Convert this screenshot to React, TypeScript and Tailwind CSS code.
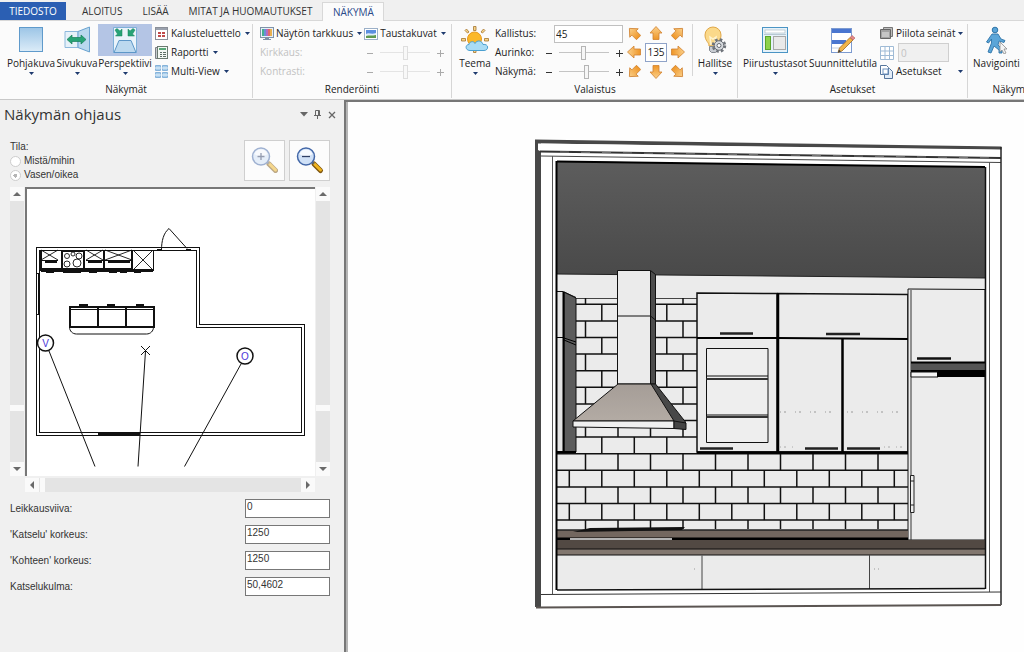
import { useState } from 'react';
import type { ReactNode } from 'react';

const tabs = ['ALOITUS', 'LISÄÄ', 'MITAT JA HUOMAUTUKSET'];

const viewFields = [
  { id: 'leikkausviiva', label: 'Leikkausviiva:', value: '0' },
  { id: 'katselu', label: "'Katselu' korkeus:", value: '1250' },
  { id: 'kohde', label: "'Kohteen' korkeus:", value: '1250' },
  { id: 'kulma', label: 'Katselukulma:', value: '50,4602' },
];

/* ---------- Icons ---------- */

function Caret() {
  return (
    <svg width="5" height="3" viewBox="0 0 5 3" className="shrink-0">
      <path d="M0 0h5L2.500 3z" fill="#1e3a6e" />
    </svg>
  );
}

function FloorIcon() {
  return (
    <svg width="26" height="28" viewBox="0 0 26 28">
      <defs>
        <linearGradient id="floor" x1="0" y1="0" x2="0" y2="1">
          <stop offset="0" stopColor="#9cc5e6" />
          <stop offset="1" stopColor="#dcecf8" />
        </linearGradient>
      </defs>
      <rect x="1.500" y="1.500" width="23" height="24" fill="url(#floor)" stroke="#5f9acb" />
    </svg>
  );
}

function SideIcon() {
  return (
    <svg width="28" height="28" viewBox="0 0 28 28">
      <path d="M2 5.500h13v16H2z" fill="#e6f1f9" stroke="#8db9dc" />
      <path d="M15 5.500L26.500 1v25L15 21.500z" fill="#b9d8ee" stroke="#6aa3d0" />
      <path d="M4 13.500l5-4.500v2.500h9V9l5 4.500-5 4.500v-2.500H9V18z" fill="#27a376" stroke="#178058" strokeWidth="0.700" />
    </svg>
  );
}

function PerspectiveIcon() {
  return (
    <svg width="28" height="28" viewBox="0 0 28 28">
      <path d="M2.500 1.500h23v25h-23z" fill="#eaf3fa" stroke="#7fb0d8" />
      <path d="M8 14.500h12l5 12H3z" fill="#bcd9ef" stroke="#5d97c8" />
      <path d="M4 4l2-1.500 3 2.500 2-2v7H4.500l2-2z" fill="#27a376" stroke="#178058" strokeWidth="0.500" />
      <path d="M24 4l-2-1.500-3 2.500-2-2v7h6.500l-2-2z" fill="#27a376" stroke="#178058" strokeWidth="0.500" />
    </svg>
  );
}

function ListIcon() {
  return (
    <svg width="14" height="14" viewBox="0 0 14 14">
      <rect x="0.500" y="0.500" width="12" height="12" fill="#fff" stroke="#8a8f98" />
      <path d="M1 1h11v2H1z" fill="#9aa1ad" />
      <path d="M3 5h3v2H3zM7 5h3v2H7zM3 8h3v2H3zM7 8h3v2H7z" fill="#c04b4b" />
    </svg>
  );
}

function ReportIcon() {
  return (
    <svg width="14" height="14" viewBox="0 0 14 14">
      <path d="M0.500 1.500h3v11h-3z" fill="#c8ccd0" stroke="#7b8086" />
      <rect x="2.500" y="0.500" width="10" height="12" fill="#f4f8f4" stroke="#6b7a70" />
      <path d="M4 2h7v2H4z" fill="#58a878" />
      <path d="M5 6.500h2M8 6.500h3M5 8.500h2M8 8.500h3M5 10.500h2M8 10.500h3" stroke="#5d6d64" />
    </svg>
  );
}

function MultiViewIcon() {
  return (
    <svg width="14" height="14" viewBox="0 0 14 14">
      <path d="M0.500 0.500h5v5h-5zM7.500 0.500h5v5h-5zM0.500 7.500h5v5h-5zM7.500 7.500h5v5h-5z" fill="#a8cdea" stroke="#86b3da" />
      <path d="M0 3h13M0 10h13" stroke="#e8f3fb" />
    </svg>
  );
}

function MonitorIcon() {
  return (
    <svg width="14" height="14" viewBox="0 0 14 14">
      <rect x="0.500" y="0.500" width="13" height="10" fill="#e8f0f8" stroke="#7f93a8" />
      <path d="M2 2h2v7H2z" fill="#45b08c" />
      <path d="M4 2h2v7H4z" fill="#6a8fd8" />
      <path d="M6 2h2v7H6z" fill="#b26cc0" />
      <path d="M8 2h2v7H8z" fill="#e06a6a" />
      <path d="M10 2h2v7h-2z" fill="#e8b050" />
      <path d="M5 11h4v1h2v1H3v-1h2z" fill="#7d90a5" />
    </svg>
  );
}

function PictureIcon() {
  return (
    <svg width="14" height="14" viewBox="0 0 14 14">
      <rect x="0.500" y="1.500" width="13" height="11" fill="#fff" stroke="#9bb0c8" />
      <path d="M2 3h10v4H2z" fill="#5b8fe0" />
      <path d="M2 8h10v3H2z" fill="#5f9a50" />
      <path d="M2 7c3-2 5 1 10-1v2c-4 1-7 0-10 1z" fill="#dfeefa" />
    </svg>
  );
}

function SunIcon() {
  return (
    <svg width="28" height="28" viewBox="0 0 28 28">
      <g fill="#f7d58a" stroke="#a3742e" strokeWidth="0.800">
        <path d="M12.500 0.500h2.500v4h-2.500zM12.500 23h2.500v3.500h-2.500zM0.500 12.500h4v2.500h-4zM23.500 12.500h4v2.500h-4z" />
        <path d="M4 4.500l1.500-1.500 2.500 3-1.500 1zM24 4.500l-1.500-1.500-2.500 3 1.500 1z" />
      </g>
      <circle cx="13.500" cy="13" r="7" fill="#fbb829" stroke="#e89a1c" />
      <path d="M9 24.500c-5 0-5-6-1-6 0-3 5-4 6-1 2-4 7-3 8 1 6-1 6 6 1 6z" fill="#a9dcf5" stroke="#4a9fd0" />
    </svg>
  );
}

function BulbIcon() {
  return (
    <svg width="24" height="28" viewBox="0 0 24 28">
      <path d="M6 20c0-4-4-5-4-11a8 8 0 0 1 16 0c0 6-4 7-4 11z" fill="#fbd98a" stroke="#e0a84a" />
      <path d="M8 19l-1-8 3 2 3-2-1 8" fill="none" stroke="#fff4d0" strokeWidth="1.500" />
      <path d="M6.500 20.500h8v4l-2 2h-4l-2-2z" fill="#c8ccd2" stroke="#83888f" />
      <circle cx="16" cy="19.500" r="6" fill="none" stroke="#6f747b" strokeWidth="2.500" strokeDasharray="2.600 2.112" />
      <circle cx="16" cy="19.500" r="4.800" fill="#d7dade" stroke="#666b72" />
      <circle cx="16" cy="19.500" r="2" fill="#fff" stroke="#666b72" />
    </svg>
  );
}

function LayersIcon() {
  return (
    <svg width="28" height="28" viewBox="0 0 28 28">
      <rect x="1.500" y="1.500" width="25" height="25" fill="#e6f2fa" stroke="#4a94c4" />
      <rect x="4" y="4" width="20" height="3" fill="#fff" stroke="#a5b4be" strokeWidth="0.600" />
      <path d="M3 8.500h22" stroke="#b8c8d2" />
      <rect x="4.500" y="10.500" width="5" height="13" fill="#8cd24c" stroke="#5aa52a" />
      <rect x="12.500" y="10.500" width="12" height="13" fill="#e9e9e9" stroke="#a8a8a8" />
    </svg>
  );
}

function DesignIcon() {
  return (
    <svg width="28" height="28" viewBox="0 0 28 28">
      <rect x="2.500" y="2.500" width="20" height="24" fill="#fff" stroke="#7d9bd0" />
      <path d="M3 3h19v4H3zM3 14h14v4H3z" fill="#4a76d0" />
      <path d="M3 22h8" stroke="#c4cfdf" />
      <path d="M9 26.500l1.500-4.500L21 11.500l3 2.500-11 11z" fill="#f2b548" stroke="#9c6a28" strokeWidth="0.800" />
      <path d="M21 11.500l2-2 3 2.500-2 2z" fill="#e58a8a" stroke="#b55a5a" strokeWidth="0.600" />
      <path d="M9 26.500l1-3 2 2z" fill="#444" />
    </svg>
  );
}

function WallsIcon() {
  return (
    <svg width="14" height="14" viewBox="0 0 14 14">
      <path d="M3.500 0.500h9v9h-9z" fill="#bcbcbc" stroke="#777" />
      <path d="M0.500 2.500h10v9h-10z" fill="#a3a3a3" stroke="#666" />
      <path d="M2 5h7v5H2z" fill="#c6c6c6" />
    </svg>
  );
}

function GridIcon() {
  return (
    <svg width="14" height="14" viewBox="0 0 14 14">
      <path d="M0.500 0.500h13v13h-13zM5 0v14M9.500 0v14M0 5h14M0 9.500h14" fill="#fff" stroke="#9fbbd6" />
    </svg>
  );
}

function PagesIcon() {
  return (
    <svg width="14" height="14" viewBox="0 0 14 14">
      <path d="M4.500 3.500h5l3 3v7h-8z" fill="#e3edf8" stroke="#55759c" />
      <path d="M0.500 0.500h6l2 2v7h-8z" fill="#fff" stroke="#55759c" />
      <rect x="3" y="4" width="5" height="5" fill="none" stroke="#6f93c0" />
    </svg>
  );
}

function WalkIcon() {
  return (
    <svg width="26" height="28" viewBox="0 0 26 28">
      <circle cx="11" cy="4" r="2.800" fill="#5aa5d8" stroke="#2f74a8" />
      <path
        d="M8 8h6l3 5 4 1.500-1 2-5-1.500-1 4 4 4v4h-3v-3l-5-4-3 7-3-1 3.500-9V13l-3 4-2-1z"
        fill="#5aa5d8"
        stroke="#2f74a8"
        strokeWidth="0.900"
      />
      <path d="M16 16l7 7h-3l2 4-2 1-2-4-2 2z" fill="#f4f4f4" stroke="#8d8d8d" strokeWidth="0.800" />
    </svg>
  );
}

function SunArrow({ angle }: { angle: number }) {
  return (
    <svg width="14" height="14" viewBox="0 0 14 14">
      <defs>
        <linearGradient id="orange" x1="0" y1="0" x2="0" y2="1">
          <stop offset="0" stopColor="#fbd08a" />
          <stop offset="1" stopColor="#ee9526" />
        </linearGradient>
      </defs>
      <path
        d="M7 0.500L13 7h-3v6.500H4V7H1z"
        fill="url(#orange)"
        stroke="#d08230"
        strokeWidth="0.800"
        transform={`rotate(${angle} 7 7)`}
      />
    </svg>
  );
}

function Magnifier({ minus = false, faded = false }: { minus?: boolean; faded?: boolean }) {
  return (
    <svg width="32" height="32" viewBox="0 0 32 32" className={faded ? 'opacity-50' : ''}>
      <path d="M20 19l6.500 6.500" stroke="#7d5510" strokeWidth="5" strokeLinecap="round" />
      <path d="M20.500 19l6 6" stroke="#f0b41e" strokeWidth="3" strokeLinecap="round" />
      <path d="M17.500 16.500l2.500 2.500" stroke="#666" strokeWidth="2" />
      <circle cx="12" cy="11.500" r="8.500" fill="#d0e1f7" stroke="#4468a8" strokeWidth="1.500" />
      <path d="M5.500 9a7 7 0 0 1 13 0c-4 3-9 3-13 0z" fill="#f6faff" />
      <path d={minus ? 'M8 11.500h8' : 'M8.500 11.500h7M12 8v7'} stroke="#2e3f66" strokeWidth="1.300" />
    </svg>
  );
}

/* ---------- Ribbon pieces ---------- */

function Group({ label, className, children }: { label: string; className: string; children: ReactNode }) {
  return (
    <section className={`flex shrink-0 flex-col ${className}`} aria-label={label}>
      <div className="flex h-[57px]">{children}</div>
      <div className="text-center leading-4">{label}</div>
    </section>
  );
}

function Divider({ className = 'h-[74px]' }: { className?: string }) {
  return <div className={`w-px shrink-0 bg-[#d6d6d6] ${className}`} />;
}

type BigProps = { label: string; icon: ReactNode; width: string; active?: boolean; caret?: boolean };

function BigButton({ label, icon, width, active = false, caret = true }: BigProps) {
  return (
    <button type="button" className={`flex shrink-0 flex-col items-center ${width}`}>
      <span className={`flex h-8 w-full items-center justify-center ${active ? 'bg-[#b4c5e5]' : ''}`}>{icon}</span>
      <span className="whitespace-nowrap leading-[14px]">{label}</span>
      <span className="pt-0.5">{caret && <Caret />}</span>
    </button>
  );
}

function SmallButton({ label, icon }: { label: string; icon: ReactNode }) {
  return (
    <button type="button" className="flex h-[19px] items-center whitespace-nowrap">
      <span className="w-4">{icon}</span>
      {label}
      <span className="ml-1">
        <Caret />
      </span>
    </button>
  );
}

type SliderProps = { id: string; value: number; disabled?: boolean };

function Slider({ id, value, disabled = false }: SliderProps) {
  const [current, setCurrent] = useState(value);
  const step = (by: number) => setCurrent((old) => Math.min(100, Math.max(0, old + by)));
  return (
    <div className={`flex h-[19px] items-center gap-1 ${disabled ? 'opacity-40' : ''}`}>
      <button type="button" aria-label="Vähennä" disabled={disabled} onClick={() => step(-5)} className="w-2.5">
        <svg width="8" height="8" viewBox="0 0 8 8">
          <path d="M1 4.500h6" stroke="#333" />
        </svg>
      </button>
      <input
        id={id}
        type="range"
        value={current}
        disabled={disabled}
        onChange={(e) => setCurrent(Number(e.target.value))}
        className="h-[15px] w-[50px] appearance-none bg-transparent bg-[linear-gradient(#c4c4c4,#c4c4c4)] bg-[length:100%_1px] bg-center bg-no-repeat [&::-webkit-slider-thumb]:h-[14px] [&::-webkit-slider-thumb]:w-[5px] [&::-webkit-slider-thumb]:appearance-none [&::-webkit-slider-thumb]:border [&::-webkit-slider-thumb]:border-[#b5b5b5] [&::-webkit-slider-thumb]:bg-[#f6f6f6]"
      />
      <button type="button" aria-label="Lisää" disabled={disabled} onClick={() => step(5)} className="w-2.5">
        <svg width="8" height="8" viewBox="0 0 8 8" className="ml-0.5">
          <path d="M1 4.500h7M4.500 1v7" stroke="#333" />
        </svg>
      </button>
    </div>
  );
}

function Ribbon() {
  return (
    <div className="flex h-[79px] shrink-0 overflow-hidden border-b border-[#c8c8c8] bg-[#fbfbfb] pt-[3px]">
      <Group label="Näkymät" className="w-[252px] pl-2 [&>div:last-child]:pr-2">
        <BigButton label="Pohjakuva" icon={<FloorIcon />} width="w-[46px]" />
        <BigButton label="Sivukuva" icon={<SideIcon />} width="w-[44px] pl-0.5" />
        <BigButton label="Perspektiivi" icon={<PerspectiveIcon />} width="w-[54px]" active />
        <div className="ml-[3px] flex flex-col items-start">
          <SmallButton label="Kalusteluettelo" icon={<ListIcon />} />
          <SmallButton label="Raportti" icon={<ReportIcon />} />
          <SmallButton label="Multi-View" icon={<MultiViewIcon />} />
        </div>
      </Group>
      <Divider />
      <Group label="Renderöinti" className="w-[198px] px-[7px]">
        <div className="flex w-full flex-col">
          <div className="flex gap-0.5">
            <SmallButton label="Näytön tarkkuus" icon={<MonitorIcon />} />
            <SmallButton label="Taustakuvat" icon={<PictureIcon />} />
          </div>
          <div className="flex items-center justify-between">
            <label htmlFor="kirkkaus" className="text-[#c2c2c2]">Kirkkaus:</label>
            <Slider id="kirkkaus" value={50} disabled />
          </div>
          <div className="flex items-center justify-between">
            <label htmlFor="kontrasti" className="text-[#c2c2c2]">Kontrasti:</label>
            <Slider id="kontrasti" value={50} disabled />
          </div>
        </div>
      </Group>
      <Divider />
      <Group label="Valaistus" className="w-[285px] pl-[5px] [&>div:last-child]:pr-1">
        <BigButton label="Teema" icon={<SunIcon />} width="w-9" />
        <div className="ml-0.5 flex w-[128px] shrink-0 flex-col">
          <div className="flex h-[19px] items-center justify-between">
            <label htmlFor="kallistus">Kallistus:</label>
            <input id="kallistus" defaultValue="45" className="h-[18px] w-[69px] border border-[#c0c0c0] bg-white px-px" />
          </div>
          <div className="flex h-[19px] items-center justify-between">
            <label htmlFor="aurinko">Aurinko:</label>
            <Slider id="aurinko" value={48} />
          </div>
          <div className="flex h-[19px] items-center justify-between">
            <label htmlFor="nakyma">Näkymä:</label>
            <Slider id="nakyma" value={56} />
          </div>
        </div>
        <div className="grid w-[66px] shrink-0 grid-cols-3 items-center justify-items-center">
          <button type="button" aria-label="Luode"><SunArrow angle={-45} /></button>
          <button type="button" aria-label="Pohjoinen"><SunArrow angle={0} /></button>
          <button type="button" aria-label="Koillinen"><SunArrow angle={45} /></button>
          <button type="button" aria-label="Länsi"><SunArrow angle={-90} /></button>
          <input aria-label="Suunta" defaultValue="135" className="h-[19px] w-[22px] border border-[#8fa3c8] bg-white text-center" />
          <button type="button" aria-label="Itä"><SunArrow angle={90} /></button>
          <button type="button" aria-label="Lounas"><SunArrow angle={-135} /></button>
          <button type="button" aria-label="Etelä"><SunArrow angle={180} /></button>
          <button type="button" aria-label="Kaakko"><SunArrow angle={135} /></button>
        </div>
        <div className="flex shrink-0 pl-[3px]">
          <Divider className="h-[52px]" />
        </div>
        <BigButton label="Hallitse" icon={<BulbIcon />} width="w-11" />
      </Group>
      <Divider />
      <Group label="Asetukset" className="w-[229px] px-1">
        <BigButton label="Piirustustasot" icon={<LayersIcon />} width="w-[66px]" />
        <BigButton label="Suunnittelutila" icon={<DesignIcon />} width="w-[70px]" caret={false} />
        <div className="ml-0.5 flex flex-1 flex-col">
          <button type="button" className="flex h-[19px] items-center">
            <span className="w-4"><WallsIcon /></span>
            <span className="flex-1 text-left">Piilota seinät</span>
            <Caret />
          </button>
          <div className="flex h-[19px] items-center">
            <label htmlFor="ruudukko" className="w-[18px]" aria-label="Ruudukko"><GridIcon /></label>
            <input id="ruudukko" disabled defaultValue="0" className="h-[19px] w-[51px] border border-[#cfcfcf] bg-[#f0f0f0] px-0.5 text-[#c2c2c2]" />
          </div>
          <button type="button" className="flex h-[19px] items-center">
            <span className="w-4"><PagesIcon /></span>
            <span className="flex-1 text-left">Asetukset</span>
            <Caret />
          </button>
        </div>
      </Group>
      <Divider />
      <Group label="Näkym" className="w-[57px] [&>div:last-child]:text-right">
        <BigButton label="Navigointi" icon={<WalkIcon />} width="w-full" caret={false} />
      </Group>
    </div>
  );
}

/* ---------- Side panel ---------- */

function ScrollArrow({ label, path }: { label: string; path: string }) {
  return (
    <button type="button" aria-label={label} className="flex size-[14px] shrink-0 items-center justify-center bg-[#fafafa]">
      <svg width="8" height="8" viewBox="0 0 8 8">
        <path d={path} fill="#6a6a6a" />
      </svg>
    </button>
  );
}

function VerticalScroll() {
  return (
    <div className="flex w-[14px] flex-col bg-[#e4e4e4]">
      <ScrollArrow label="Ylös" path="M0 6h8L4 2z" />
      <div className="flex-1" />
      <div className="h-1.5 bg-[#fafafa]" />
      <div className="h-[51px]" />
      <ScrollArrow label="Alas" path="M0 2h8L4 6z" />
    </div>
  );
}

function FloorPlan() {
  return (
    <svg viewBox="27 189 288 287" className="w-full bg-white" shapeRendering="crispEdges">
      <g fill="none" stroke="#111">
        {/* walls */}
        <path d="M36 247H199.500V324H304.500V435.500H36Z" />
        <path d="M39.500 250H196.500V327H301.500V432.500H39.500Z" />
        <path d="M36 273h4M36 314h4M38 273v41" />
        <path d="M98 433.500h42" strokeWidth="3" />
        {/* door */}
        <path d="M157 250h5M186 250h5" strokeWidth="2" />
        <path d="M161.500 250c0-9 2-17 7.500-21.500L187 248.500" shapeRendering="auto" />
        {/* cabinets */}
        <path d="M41 250v20h21v-20M84 250v20h20v-20M104 250v20h28v-20M132.500 250v20h21v-20" strokeWidth="1.500" />
        <path d="M41 260.500h17M86 260.500h46M41 268.500h92" />
        <path d="M41 270.500h112" strokeWidth="2" />
        <path d="M62 251h22v19H62z" strokeWidth="2" />
        <path d="M45 262h12M88 262h14M108 262h22M46 272h8M63 272h18M89 272h8M109 272h8M120 272h7M134 272h7" strokeWidth="2" />
        <g shapeRendering="auto" strokeWidth="0.900">
          <path d="M41 250l17 10M58 250l-17 10M86 250l17 10M103 250l-17 10M105 250l27 10M132 250l-27 10M133 250l20 20M153 250l-20 20" />
          <circle cx="67" cy="256" r="2.500" />
          <circle cx="79" cy="256" r="3" />
          <circle cx="67" cy="264" r="3" />
          <circle cx="77" cy="263" r="4" />
          <circle cx="73" cy="254" r="2" />
        </g>
        {/* island */}
        <path d="M69.500 306.500h84v20h-84z" strokeWidth="2" />
        <path d="M97.500 306v21M125.500 306v21" strokeWidth="2" />
        <path d="M70 309.500h83" />
        <path d="M69.500 327c0 4 3 7 7 7h70c4 0 7-3 7-7" shapeRendering="auto" />
        <path d="M79 305h9M107 305h8M136 305h8" strokeWidth="2" />
        {/* sight lines */}
        <g shapeRendering="auto">
          <path d="M49 351L95 466.500M145.500 351L138 466.500M241 364L184.500 466.500" />
          <path d="M141 346l9 9M150 346l-9 9" />
          <circle cx="45.500" cy="343" r="8" fill="#fff" strokeWidth="1.500" />
          <circle cx="245" cy="356" r="8" fill="#fff" strokeWidth="1.500" />
        </g>
      </g>
      <g fill="#4a35d8" fontSize="10" textAnchor="middle" fontFamily="Liberation Sans, sans-serif">
        <text x="45.500" y="347">V</text>
        <text x="245" y="360">O</text>
      </g>
    </svg>
  );
}

function SidePanel() {
  const [mode, setMode] = useState('vasen');
  return (
    <aside className="w-[344px] shrink-0 bg-[#f0f0f0] font-['Liberation_Sans',Arial,sans-serif] text-[10px] text-[#333]">
      <div className="flex h-[29px] items-center pl-1 pr-2 text-[#666]">
        <h1 className="flex-1 font-['Open_Sans','Noto_Sans',sans-serif] text-[15px] text-[#333]">Näkymän ohjaus</h1>
        <button type="button" aria-label="Valikko" className="w-[14px]">
          <svg width="8" height="5" viewBox="0 0 8 5"><path d="M0 0h8L4 4.500z" fill="#666" /></svg>
        </button>
        <button type="button" aria-label="Kiinnitä" className="w-[14px]">
          <svg width="7" height="9" viewBox="0 0 7 9">
            <path d="M1.500 5V0.500h4V5M0 5.500h7M3.500 6v3M4.500 1v4" fill="none" stroke="#666" />
          </svg>
        </button>
        <button type="button" aria-label="Sulje">
          <svg width="8" height="8" viewBox="0 0 8 8"><path d="M1 1l6 6M7 1l-6 6" stroke="#666" strokeWidth="1.300" /></svg>
        </button>
      </div>

      <div className="pl-[10px] pr-[14px] pt-[11px]">
        <div className="flex items-start">
          <fieldset className="flex-1 leading-[14px]">
            <legend>Tila:</legend>
            {[['mista', 'Mistä/mihin'], ['vasen', 'Vasen/oikea']].map(([value, label]) => (
              <label key={value} className="flex items-center gap-[3px]">
                <input
                  type="radio"
                  name="tila"
                  checked={mode === value}
                  onChange={() => setMode(value)}
                  className="size-[11px] appearance-none rounded-full border border-[#cdcdcd] bg-white checked:bg-[radial-gradient(#b5b5b5_2px,#fff_2px)]"
                />
                {label}
              </label>
            ))}
          </fieldset>
          <div className="flex gap-1">
            <button type="button" aria-label="Lähennä" className="flex size-[41px] items-center justify-center border border-[#cfcfcf] bg-[#fcfcfc]">
              <Magnifier faded />
            </button>
            <button type="button" aria-label="Loitonna" className="flex size-[41px] items-center justify-center border border-[#cfcfcf] bg-[#fcfcfc]">
              <Magnifier minus />
            </button>
          </div>
        </div>

        <div className="mt-[5px] flex gap-px">
          <VerticalScroll />
          <div className="flex-1 border-l-2 border-t-2 border-[#777] bg-white">
            <FloorPlan />
          </div>
          <VerticalScroll />
        </div>
        <div className="mx-[15px] mt-0.5 flex h-[14px] bg-[#e4e4e4]">
          <ScrollArrow label="Vasemmalle" path="M6 0v8L2 4z" />
          <div className="ml-px w-[5px] bg-[#fafafa]" />
          <div className="flex-1" />
          <ScrollArrow label="Oikealle" path="M2 0v8l4-4z" />
        </div>

        <div className="mt-[7px] flex flex-col gap-[7px]">
          {viewFields.map((field) => (
            <div key={field.id} className="flex items-center justify-between">
              <label htmlFor={field.id}>{field.label}</label>
              <input
                id={field.id}
                defaultValue={field.value}
                className="h-[19px] w-[85px] border border-[#777] bg-white px-px pb-1"
              />
            </div>
          ))}
        </div>
      </div>
    </aside>
  );
}

/* ---------- Perspective view ---------- */

const TILE_ROWS = Array.from({ length: 15 }, (_, i) => 287.7 + i * 16.6);

function Tiles() {
  return (
    <g clipPath="url(#tiled)" stroke="#111" strokeWidth="1.500">
      {TILE_ROWS.map((y, row) => (
        <g key={row}>
          <path d={`M557 ${y}H908`} />
          {Array.from({ length: 11 }, (_, i) => {
            const x = (row % 2 === 0 ? 585.5 : 569.3) + i * 32.5;
            return <path key={i} d={`M${x} ${y}v16.600`} />;
          })}
        </g>
      ))}
    </g>
  );
}

function KitchenView() {
  return (
    <svg viewBox="348 102 676 550" className="size-full">
      <defs>
        <linearGradient id="ceiling" x1="0" y1="0" x2="0" y2="1">
          <stop offset="0" stopColor="#5d5d5d" />
          <stop offset="1" stopColor="#494949" />
        </linearGradient>
        <linearGradient id="hood" x1="0" y1="0" x2="0" y2="1">
          <stop offset="0" stopColor="#a59d97" />
          <stop offset="1" stopColor="#b3aba4" />
        </linearGradient>
        <clipPath id="tiled">
          <path d="M576 298h121v155h211v76H557v-76h19z" />
        </clipPath>
      </defs>

      {/* window frame */}
      <path d="M535 139.500L1001.500 146.500V605.500L535 608z" fill="#fff" />
      <path d="M535 139.500L1001.500 146.500V149.500L541 143.500V607H535z" fill="#484848" />
      <path d="M538 143.500L1001 150v8L540 151l-2-1z" fill="#fff" />
      <path d="M540 151.500L1001 158" stroke="#333" strokeWidth="2" />
      <path d="M560 152L1001 158" stroke="#777" strokeDasharray="9 12" />
      <path d="M541 156L1001 162.500" stroke="#444" />
      <path d="M552.500 156V594M989.500 162V592M1001 147V605" stroke="#555" />
      <path d="M1001 147V605" stroke="#111" />
      <path d="M541 594.500L1001 592" stroke="#333" />
      <path d="M536 607.500L1001 605" stroke="#5b5552" strokeWidth="2" />

      {/* room */}
      <path d="M557 161L985 167V588L557 590z" fill="#ebebeb" />
      <path d="M557 161L985 167V278L557 274z" fill="url(#ceiling)" />
      <path d="M557 161.500L985 167" stroke="#000" strokeWidth="2" />
      <path d="M557 274L985 278" stroke="#222" />

      <path d="M576 298.500H697" stroke="#444" />
      <Tiles />

      {/* tall cabinet on the left wall */}
      <path d="M558 291.500h5V451h-5z" fill="#e4e4e4" />
      <path d="M564 292l12 6V452h-12z" fill="#5c5c5c" stroke="#111" />
      <path d="M557 291.500h6l13 6" fill="none" stroke="#111" />
      <path d="M563.500 292V452" stroke="#000" strokeWidth="2" />
      <path d="M557 337.500h6M564 338l12 4M564 340l12 5" stroke="#000" />
      <path d="M557 452h19" stroke="#000" strokeWidth="2" />

      {/* hood */}
      <path d="M650.500 270.500l5 4V384h-5z" fill="#4c4c4c" stroke="#111" />
      <path d="M617.500 270.500h33V384h-33z" fill="#ebebeb" stroke="#111" />
      <path d="M617.500 316h33l5 4" fill="none" stroke="#111" />
      <path d="M650.500 384h5l30 38v7l-12-1z" fill="#484848" stroke="#111" />
      <path d="M618 384h33l23 37H573z" fill="url(#hood)" stroke="#111" />
      <path d="M573 421h101v7.500L573 427z" fill="#f0f0f0" stroke="#111" />
      <path d="M674 421l12 2v6.500l-12-1z" fill="#444" stroke="#111" />

      {/* wall cabinets */}
      <path d="M697 293L777 293.500V452H697z" fill="#ebebeb" stroke="#111" strokeWidth="1.500" />
      <path d="M778 293.500L908 294.500V452H778z" fill="#ebebeb" stroke="#111" strokeWidth="1.500" />
      <path d="M706.500 348.500h61.500V442.500h-61.500z" fill="#eee" stroke="#111" />
      <path d="M706.500 376H768M706.500 415H768" stroke="#111" />
      <path d="M706.500 379H768M706.500 417H768" stroke="#333" strokeWidth="2" />
      <path d="M697 338H778L908 339" fill="none" stroke="#000" strokeWidth="2" />
      <path d="M778 293V452M842.500 339V452" stroke="#000" strokeWidth="2.500" />
      <path d="M697 452.500H908" stroke="#000" strokeWidth="2.500" />
      <path d="M720 333.500h33M826 334h34M700 448.500h33M805 448.500h33M847 448.500h33" stroke="#222" strokeWidth="2.500" />
      <path d="M780 412h60M847 412h58" stroke="#999" strokeDasharray="1 3 2 9" />
      <path d="M780 447h16M884 447h22" stroke="#aaa" strokeDasharray="1 3 2 6" />

      {/* fridge */}
      <path d="M908 289L985 289.500V540H908z" fill="#ececec" stroke="#111" />
      <path d="M911 290V540" stroke="#333" />
      <path d="M911 362H985v9H911z" fill="#555" />
      <path d="M911 362.500H985M911 371H985" stroke="#000" strokeWidth="2" />
      <path d="M911 372h27v5h-27z" fill="#f4f4f4" stroke="#111" />
      <path d="M937 372h48v5h-48z" fill="#000" />
      <path d="M917 358.500h34" stroke="#111" strokeWidth="2.500" />
      <path d="M910.500 475.500h3.500v37h-3.500zM910.500 481h3.500M910.500 505h3.500" fill="#eee" stroke="#222" />

      {/* worktops */}
      <path d="M557 530H908v8H557z" fill="#73675f" />
      <path d="M557 530H908" stroke="#222" strokeWidth="1.500" />
      <path d="M557 537.500H908v3H557z" fill="#000" />
      <path d="M570 539h102" stroke="#eee" strokeWidth="1.500" />
      <path d="M573 532l17-4 95-1-3 3-50 1z" fill="#111" />
      <path d="M557 540H985v9H557z" fill="#524943" />
      <path d="M557 549H985v6H557z" fill="#82776f" />
      <path d="M557 549H985M557 555H985" stroke="#111" />
      <path d="M702 555.500V589M869.500 555V589" stroke="#444" />
      <path d="M874 569h1M878 569h1M694 569h1" stroke="#999" />
      <path d="M557 590L985 588.500" stroke="#111" strokeWidth="1.500" />
      <path d="M556.500 161V590" stroke="#000" strokeWidth="2" />
      <path d="M985.500 167V589" stroke="#111" strokeWidth="1.500" />
    </svg>
  );
}

export default function App() {
  return (
    <div className="flex h-screen flex-col overflow-hidden bg-[#f0f0f0] font-['Open_Sans','Noto_Sans',sans-serif] text-[10px] text-[#222]">
      <nav className="flex h-[21px] shrink-0 items-stretch border-b border-[#d8d8d8] pt-0.5 text-[#333]">
        <button type="button" className="mr-1.5 w-[66px] bg-[#2b5fb3] text-white">TIEDOSTO</button>
        {tabs.map((tab) => (
          <button key={tab} type="button" className="px-2.5">
            {tab}
          </button>
        ))}
        <button type="button" className="-mb-px w-[62px] border-x border-t border-[#d8d8d8] bg-[#fbfbfb] text-[#2b4a8a]">
          NÄKYMÄ
        </button>
      </nav>
      <Ribbon />
      <main className="flex min-h-0 flex-1">
        <SidePanel />
        <section aria-label="Perspektiivinäkymä" className="min-w-0 flex-1 border-l-2 border-t-2 border-[#777] bg-[#fefefe]">
          <div className="size-full border-l-2 border-[#b5b5b5]">
            <KitchenView />
          </div>
        </section>
      </main>
    </div>
  );
}
